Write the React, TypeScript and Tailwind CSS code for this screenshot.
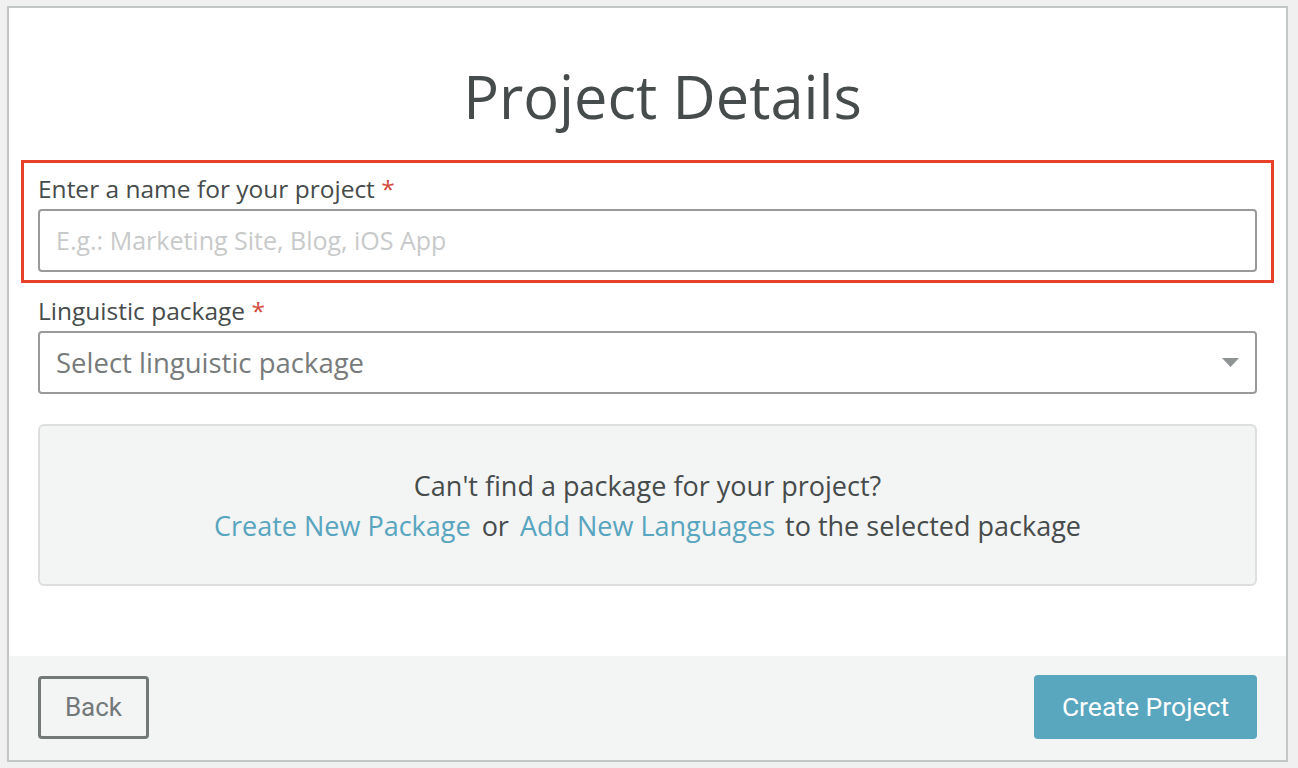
import React from "react";

export default function App() {
  return (
    <div className="w-[1298px] h-[768px] bg-[#f0f0f0] pt-[6px] pl-[7px] overflow-hidden" style={{ fontFamily: "'Open Sans', Lato, sans-serif" }}>
      <div className="w-[1281px] h-[756px] border-2 border-[#c3c7c7] bg-white flex flex-col">
        <div className="flex-1 flex flex-col px-[29px]">
          <h1 className="text-center text-[59.5px] leading-none text-[#464b4b] mt-[58px] h-[94px] pl-[30px]">Project Details</h1>
          <div className="mx-[-17px] border-[3px] border-[#e8412a] px-[14px] pt-[12px] pb-[8px]">
            <div className="text-[24.5px] leading-[28px] text-[#464b4b] mb-[6px]">
              Enter a name for your project <span className="text-[#d2493a]">*</span>
            </div>
            <div className="h-[63px] border-2 border-[#999b9b] rounded-[4px] flex items-center px-[16px] text-[25px] text-[#c8caca]">
              E.g.: Marketing Site, Blog, iOS App
            </div>
          </div>
          <div className="mt-[14px] text-[24.5px] leading-[28px] text-[#464b4b] mb-[6px]">
            Linguistic package <span className="text-[#d2493a]">*</span>
          </div>
          <div className="h-[63px] border-2 border-[#999b9b] rounded-[4px] flex items-center justify-between pl-[16px] pr-[16px] text-[27.5px] text-[#777b7b]">
            <span>Select linguistic package</span>
            <svg width="17" height="10" viewBox="0 0 17 10"><path d="M0 0 L17 0 L8.5 9 Z" fill="#8f9393" /></svg>
          </div>
          <div className="mt-[30px] h-[162px] bg-[#f3f4f4] border-2 border-[#dddede] rounded-[6px] flex flex-col items-center justify-center pt-[2px] text-[27px] leading-[40px] text-[#464b4b]">
            <div>Can't find a package for your project?</div>
            <div>
              <span className="text-[#57a5be]">Create New Package</span>
              <span className="mx-[11px]">or</span>
              <span className="text-[#57a5be]">Add New Languages</span>
              <span className="ml-[10px]">to the selected package</span>
            </div>
          </div>
        </div>
        <div className="h-[104px] bg-[#f3f4f4] flex items-center justify-between px-[29px] pb-[2px]" style={{ fontFamily: "Roboto, sans-serif" }}>
          <button className="w-[111px] h-[63px] border-[3px] border-[#737979] rounded-[4px] text-[26px] text-[#737979]">Back</button>
          <button className="w-[223px] h-[64px] bg-[#59a6bf] rounded-[4px] text-[26.5px] text-white">Create Project</button>
        </div>
      </div>
    </div>
  );
}
